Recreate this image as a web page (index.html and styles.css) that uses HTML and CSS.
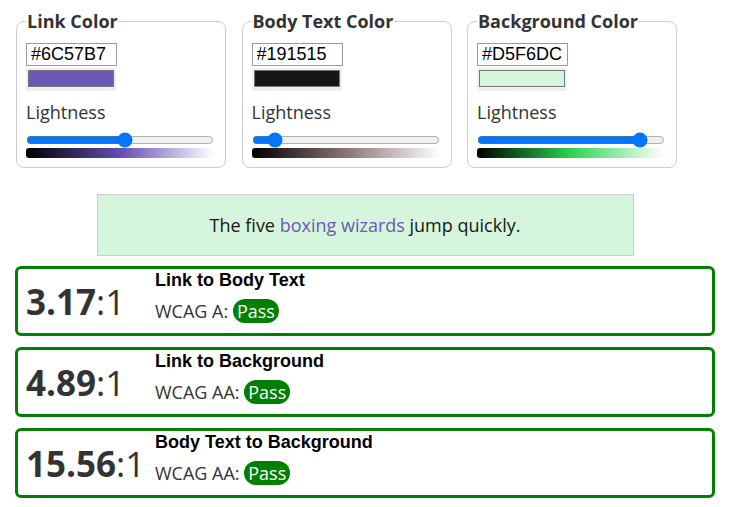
FILE: index.html
```html
<!DOCTYPE html>
<html lang="en">
<head>
<meta charset="utf-8">
<title>Contrast Checker</title>
<link rel="stylesheet" href="styles.css">
</head>
<body>
<main class="page">
  <div class="pickers">
    <fieldset class="picker">
      <legend>Link Color</legend>
      <input class="hex" type="text" value="#6C57B7">
      <div class="swatch"><span class="swatch-fill fill-link"></span></div>
      <label class="light-label">Lightness</label>
      <input class="slider" type="range" min="0" max="100" value="53">
      <div class="gradient grad-link"></div>
    </fieldset>
    <fieldset class="picker">
      <legend>Body Text Color</legend>
      <input class="hex" type="text" value="#191515">
      <div class="swatch"><span class="swatch-fill fill-body"></span></div>
      <label class="light-label">Lightness</label>
      <input class="slider" type="range" min="0" max="100" value="9">
      <div class="gradient grad-body"></div>
    </fieldset>
    <fieldset class="picker">
      <legend>Background Color</legend>
      <input class="hex" type="text" value="#D5F6DC">
      <div class="swatch"><span class="swatch-fill fill-bg"></span></div>
      <label class="light-label">Lightness</label>
      <input class="slider" type="range" min="0" max="100" value="90">
      <div class="gradient grad-bg"></div>
    </fieldset>
  </div>

  <div class="preview">
    <p>The five <a href="#">boxing wizards</a> jump quickly.</p>
  </div>

  <section class="result">
    <div class="ratio"><b>3.17</b>:1</div>
    <div class="info">
      <div class="title">Link to Body Text</div>
      <div class="level">WCAG A: <span class="pass">Pass</span></div>
    </div>
  </section>
  <section class="result">
    <div class="ratio"><b>4.89</b>:1</div>
    <div class="info">
      <div class="title">Link to Background</div>
      <div class="level">WCAG AA: <span class="pass">Pass</span></div>
    </div>
  </section>
  <section class="result">
    <div class="ratio"><b>15.56</b>:1</div>
    <div class="info">
      <div class="title">Body Text to Background</div>
      <div class="level">WCAG AA: <span class="pass">Pass</span></div>
    </div>
  </section>
</main>
</body>
</html>
```

FILE: styles.css
```css
html, body {
  margin: 0;
  padding: 0;
  background: #fff;
}

body {
  font-family: "Open Sans", "DejaVu Sans", sans-serif;
  font-size: 18px;
  color: #333;
}

.page {
  width: 700px;
  padding: 9px 0 0 15px;
}

.pickers {
  display: flex;
  gap: 15.5px;
  padding-left: 1px;
}

.picker {
  box-sizing: border-box;
  width: 210px;
  min-width: 0;
  margin: 0;
  border: 1px solid #ccc;
  border-radius: 8px;
  padding: 9.5px 9px 9.5px 9px;
}

.picker legend {
  font-weight: 700;
  font-size: 18px;
  line-height: 24.5px;
  padding: 0 1px;
  color: #333;
}

.hex {
  display: block;
  box-sizing: border-box;
  width: 91px;
  height: 23px;
  margin: 0;
  padding: 0 4px;
  border: 1px solid #9a9a9a;
  border-radius: 0;
  font-family: "Liberation Sans", Arial, sans-serif;
  font-size: 18px;
  color: #000;
  background: #fff;
  outline: none;
}

.swatch {
  display: block;
  box-sizing: border-box;
  width: 90px;
  height: 23px;
  margin-top: 2px;
  padding: 2px 2px 4px;
  background: #efefef;
}

.swatch-fill {
  display: block;
  box-sizing: border-box;
  height: 100%;
  border: 1px solid #777;
}

.fill-link { background: #6C57B7; }
.fill-body { background: #191515; }
.fill-bg { background: #D5F6DC; }

.light-label {
  display: block;
  margin-top: 9px;
  line-height: 24.5px;
}

.slider {
  display: block;
  width: 188px;
  height: 16px;
  margin: 7px 0 0;
}

.gradient {
  width: 188px;
  height: 10px;
  border-radius: 3px 0 0 3px;
}

.grad-link { background: linear-gradient(to right, #000, hsl(253, 40%, 50%), #fff); }
.grad-body { background: linear-gradient(to right, #000, hsl(0, 9%, 50%), #fff); }
.grad-bg { background: linear-gradient(to right, #000, hsl(133, 65%, 50%), #fff); }

.preview {
  box-sizing: border-box;
  width: 537px;
  height: 62px;
  margin: 26px auto 0;
  border: 1px solid #ccc;
  background: #D5F6DC;
  display: flex;
  align-items: center;
  justify-content: center;
}

.preview p {
  margin: 0;
  color: #191515;
  line-height: 24.5px;
}

.preview a {
  color: #6C57B7;
  text-decoration: none;
}

.result {
  box-sizing: border-box;
  height: 70px;
  margin-top: 11px;
  border: 3px solid #008000;
  border-radius: 6px;
  padding: 0 8px;
  display: flex;
  align-items: center;
}

.preview + .result {
  margin-top: 10px;
}

.ratio {
  width: 129px;
  flex: none;
  font-size: 35px;
  color: #333;
}

.ratio b {
  font-weight: 700;
}

.info {
  align-self: flex-start;
  padding-top: 1px;
}

.title {
  font-family: "Liberation Sans", Arial, sans-serif;
  font-weight: 700;
  font-size: 18px;
  line-height: 21px;
  color: #000;
  margin-bottom: 8px;
}

.level {
  line-height: 24px;
  color: #333;
}

.pass {
  display: inline-block;
  background: #008000;
  color: #fff;
  padding: 0 4px;
  border-radius: 12px;
  line-height: 24px;
}
```
